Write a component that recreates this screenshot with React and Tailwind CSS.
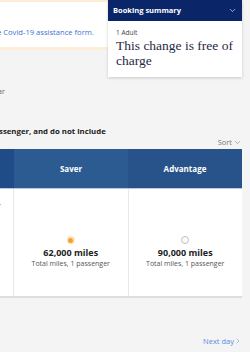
import { ChevronDown, ChevronRight } from 'lucide-react'

const fares = [
  { name: 'Saver', miles: '62,000 miles', selected: true, head: 'bg-[#2c5b92]' },
  { name: 'Advantage', miles: '90,000 miles', selected: false, head: 'bg-[#27528a]' },
]

export default function App() {
  return (
    <div className="relative w-[250px] h-[352px] overflow-hidden bg-[#f4f4f4] font-['Open_Sans',sans-serif] text-[#222]">
      {/* covid banner */}
      <div className="w-[242px] h-[50px] bg-white border-t-[2px] border-b-[3px] border-[#fdeed8] flex items-end pb-[10px]">
        <p className="-ml-[3px] text-[7.6px] leading-[10px] text-[#333] whitespace-nowrap">
          e <span className="text-[#3b73d1]">Covid-19 assistance form.</span>
        </p>
      </div>

      <p className="mt-[37px] text-[7px] leading-[10px] text-[#666] -ml-[2px]">ar</p>

      <p className="mt-[28px] -ml-[1px] text-[7.8px] leading-[12px] font-bold text-[#222] whitespace-nowrap">ssenger, and do not include</p>

      <div className="w-[242px] flex justify-end">
        <button className="flex items-center gap-[1px] text-[7.5px] leading-[10px] text-[#777]">
          Sort <ChevronDown size={9} strokeWidth={1.5} />
        </button>
      </div>

      {/* fare table */}
      <div className="mt-[2px] w-[242px] shadow-[0_2px_0_#dedede]">
        <div className="flex h-[40px] border-b border-[#b7c9e2]">
          <div className="w-[14px] bg-[#1f4c86]" />
          {fares.map(f => (
            <div key={f.name} className={`flex-1 flex items-center justify-center text-[8px] font-bold text-white ${f.head}`}>{f.name}</div>
          ))}
        </div>
        <div className="flex h-[107px] bg-white">
          <div className="w-[14px] border-r border-[#e8e8e8] relative">
            <span className="absolute left-[-2px] top-[12px] text-[7px] text-[#5a4fb0]">r</span>
          </div>
          {fares.map((f, i) => (
            <div key={f.name} className={`flex-1 flex flex-col items-center pt-[47px] ${i === 0 ? 'border-r border-[#e8e8e8]' : ''}`}>
              {f.selected ? (
                <span className="w-[8px] h-[8px] rounded-full bg-[#ffe3bf] flex items-center justify-center">
                  <span className="w-[5px] h-[5px] rounded-full bg-[#f7a12c]" />
                </span>
              ) : (
                <span className="w-[8px] h-[8px] rounded-full border border-[#bdbdbd] bg-white" />
              )}
              <p className="mt-[3px] text-[9px] leading-[12px] font-bold text-[#222]">{f.miles}</p>
              <p className="text-[7px] leading-[10px] text-[#555]">Total miles, 1 passenger</p>
            </div>
          ))}
        </div>
      </div>

      <div className="w-[242px] flex justify-end mt-[40px]">
        <a className="flex items-center text-[7.5px] leading-[10px] text-[#5b8be0]">
          Next day <ChevronRight size={8} strokeWidth={1.5} />
        </a>
      </div>

      {/* booking summary */}
      <div className="absolute left-[108px] top-0 w-[134px] bg-white shadow-[0_1px_3px_rgba(0,0,0,0.18)]">
        <div className="h-[21px] bg-[#0a2668] flex items-center justify-between px-[5px]">
          <span className="text-[7.5px] font-bold text-white">Booking summary</span>
          <ChevronDown size={9} strokeWidth={2} className="text-[#c9d3ea]" />
        </div>
        <div className="pl-[8px] pr-[4px] pt-[8px] pb-[9px]">
          <p className="text-[6.5px] leading-[8px] text-[#444]">1 Adult</p>
          <p className="mt-[1px] font-['Liberation_Serif',serif] text-[13.5px] leading-[15px] text-[#1f2a44]">This change is free of charge</p>
        </div>
      </div>
    </div>
  )
}
